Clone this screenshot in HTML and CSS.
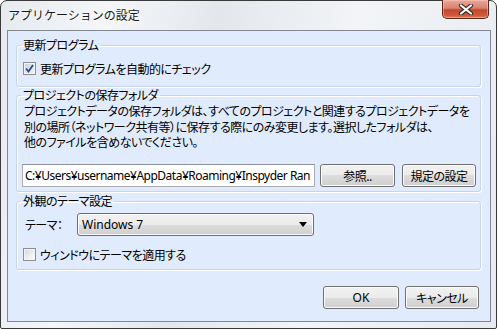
FILE: index.html
```html
<!DOCTYPE html>
<html lang="ja">
<head>
  <meta charset="UTF-8">
  <title>アプリケーションの設定</title>
  <link rel="stylesheet" href="styles.css">
</head>
<body>

<div class="window">
  <div class="titlebar">
    <span class="title">アプリケーションの設定</span>
    <button class="close" aria-label="閉じる">
      <svg width="16" height="11" viewBox="0 0 16 11">
        <path d="M3 1.5 L13 9.5 M13 1.5 L3 9.5" stroke="#3a2a28" stroke-width="4.2" stroke-linecap="round"/>
        <path d="M3 1.5 L13 9.5 M13 1.5 L3 9.5" stroke="#ffffff" stroke-width="2.2" stroke-linecap="round"/>
      </svg>
    </button>
  </div>

  <div class="client">
    <fieldset class="group group-update">
      <legend>更新プログラム</legend>
      <label class="check">
        <span class="box checked">
          <svg width="9" height="9" viewBox="0 0 9 9"><path d="M1 4.5 L3.5 7.5 L8 1" fill="none" stroke="#2a4a8c" stroke-width="1.8"/></svg>
        </span>
        更新プログラムを自動的にチェック
      </label>
    </fieldset>

    <fieldset class="group group-folder">
      <legend>プロジェクトの保存フォルダ</legend>
      <p class="note">プロジェクトデータの保存フォルダは、すべてのプロジェクトと関連するプロジェクトデータを<br>別の場所（ネットワーク共有等）に保存する際にのみ変更します。選択したフォルダは、<br>他のファイルを含めないでください。</p>
      <div class="path-row">
        <div class="path-input">C:¥Users¥username¥AppData¥Roaming¥Inspyder Ran</div>
        <button class="btn btn-browse">参照..</button>
        <button class="btn btn-default">規定の設定</button>
      </div>
    </fieldset>

    <fieldset class="group group-theme">
      <legend>外観のテーマ設定</legend>
      <div class="theme-row">
        <span class="theme-label">テーマ：</span>
        <div class="combo">
          <span>Windows 7</span>
          <svg width="8" height="5" viewBox="0 0 8 5"><path d="M0 0 H8 L4 5 Z" fill="#000"/></svg>
        </div>
      </div>
      <label class="check">
        <span class="box"></span>
        ウィンドウにテーマを適用する
      </label>
    </fieldset>

    <div class="actions">
      <button class="btn btn-ok">OK</button>
      <button class="btn btn-cancel">キャンセル</button>
    </div>
  </div>
</div>

</body>
</html>
```

FILE: styles.css
```css
body {
  margin: 0;
  padding: 0;
  font-family: "Noto Sans CJK JP", "Noto Sans", sans-serif;
  font-size: 12px;
  font-feature-settings: "palt";
  letter-spacing: -0.5px;
  color: #000;
  background: #ffffff;
}

.window {
  width: 497px;
  height: 329px;
  box-sizing: border-box;
  border: 1px solid #3a3a3a;
  border-radius: 7px 7px 2px 2px;
  background: linear-gradient(100deg, #e6eaef 0%, #f4f6f9 20%, #e3e7ec 40%, #f2f4f7 65%, #e7ebf0 100%);
  display: flex;
  flex-direction: column;
}

.titlebar {
  height: 29px;
  display: flex;
  align-items: flex-start;
  justify-content: space-between;
}

.title {
  padding: 6px 0 0 7px;
  line-height: 16px;
  font-size: 12px;
  font-feature-settings: normal;
  letter-spacing: 0;
  color: #1a1a1a;
  text-shadow: 0 0 6px #fff, 0 0 3px #fff;
}

.close {
  margin: -1px 7px 0 0;
  width: 47px;
  height: 19px;
  padding: 0;
  border: 1px solid #5e2519;
  border-top: none;
  border-radius: 0 0 5px 5px;
  background: linear-gradient(#e9a899 0%, #d9836f 45%, #c5482f 55%, #cc5a3a 85%, #e07c55 100%);
  box-shadow: inset 0 0 0 1px rgba(255, 210, 200, 0.45), 0 1px 1px rgba(255, 255, 255, 0.8);
  display: flex;
  align-items: center;
  justify-content: center;
}

.client {
  flex: 1;
  margin: 0 5px 6px 6px;
  border: 1px solid #828790;
  background: #e0ebfd;
  padding: 7px 9px 0 8px;
  display: flex;
  flex-direction: column;
}

.group {
  margin: 0;
  padding: 0 4px 0 6px;
  border: 1px solid #c9d5e4;
  border-radius: 3px;
  box-shadow: inset 1px 1px 0 #ffffff, 1px 1px 0 #ffffff;
}

.group legend {
  padding: 0 2px;
  margin-left: -2px;
  line-height: 14px;
}

.group-update {
  padding-top: 8px;
  padding-bottom: 10px;
}

.group-folder {
  margin-top: 1px;
  padding-top: 1px;
  padding-bottom: 4px;
}

.group-theme {
  margin-top: 2px;
  padding-top: 5px;
  padding-bottom: 7px;
}

.check {
  display: flex;
  align-items: center;
  height: 16px;
  gap: 4px;
}

.box {
  width: 11px;
  height: 11px;
  border: 1px solid #8f8f8f;
  background: linear-gradient(135deg, #d6d8dc, #ffffff);
  box-shadow: inset 0 0 0 1px #f4f4f4;
  display: flex;
  align-items: center;
  justify-content: center;
}

.box.checked {
  background: linear-gradient(135deg, #c8d0dc, #f4f6fa);
}

.note {
  margin: 0;
  padding-left: 1px;
  line-height: 15.5px;
  white-space: nowrap;
}

.path-row {
  margin-top: 13.5px;
  display: flex;
  align-items: center;
  height: 24px;
}

.path-input {
  margin-left: -1px;
  width: 289px;
  height: 21px;
  border: 1px solid #abadb3;
  border-top-color: #8e929a;
  background: #fff;
  font-family: "Noto Sans", sans-serif;
  letter-spacing: -0.5px;
  line-height: 21px;
  padding-left: 2px;
  overflow: hidden;
  white-space: nowrap;
}

.btn {
  height: 23px;
  padding: 0;
  border: 1px solid #707070;
  border-radius: 3px;
  background: linear-gradient(#f2f2f2 0%, #ebebeb 50%, #dddddd 50%, #cfcfcf 100%);
  box-shadow: inset 0 0 0 1px #fbfbfb;
  font-family: "Noto Sans CJK JP", "Noto Sans", sans-serif;
  font-size: 12px;
  font-feature-settings: "palt";
  letter-spacing: -0.5px;
  color: #000;
}

.btn-browse {
  width: 75px;
  margin-left: 5px;
}

.btn-default {
  width: 74px;
  margin-left: 7px;
}

.theme-row {
  display: flex;
  align-items: center;
  height: 23px;
  margin-bottom: 10px;
}

.theme-label {
  width: 52px;
  padding-left: 2px;
}

.combo {
  width: 225px;
  height: 21px;
  border: 1px solid #707070;
  border-radius: 3px;
  background: linear-gradient(#f2f2f2 0%, #ebebeb 50%, #dddddd 50%, #cfcfcf 100%);
  box-shadow: inset 0 0 0 1px #fbfbfb;
  display: flex;
  align-items: center;
  justify-content: space-between;
  padding: 0 6px 0 4px;
  font-family: "Noto Sans", sans-serif;
  letter-spacing: 0;
}

.actions {
  margin-top: 16px;
  margin-right: 2px;
  display: flex;
  justify-content: flex-end;
  gap: 6px;
}

.btn-ok {
  width: 76px;
  font-family: "Noto Sans", sans-serif;
  letter-spacing: 0;
}

.btn-cancel {
  width: 74px;
}
```
